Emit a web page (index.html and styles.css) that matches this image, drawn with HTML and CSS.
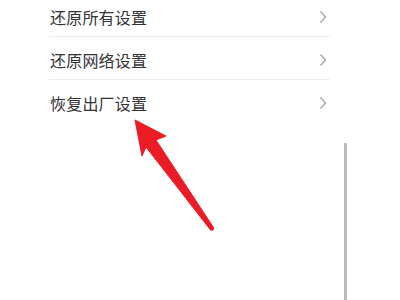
FILE: index.html
```html
<!DOCTYPE html>
<html lang="zh">
<head>
<meta charset="utf-8">
<link rel="stylesheet" href="styles.css">
</head>
<body>
<div class="page">
  <ul class="list">
    <li class="row"><span class="label">还原所有设置</span><svg class="chev" width="8" height="14" viewBox="0 0 8 14"><polyline points="1.5,1.5 6.5,7 1.5,12.5" fill="none" stroke="#a8a8a8" stroke-width="1.4"/></svg></li>
    <li class="row"><span class="label">还原网络设置</span><svg class="chev" width="8" height="14" viewBox="0 0 8 14"><polyline points="1.5,1.5 6.5,7 1.5,12.5" fill="none" stroke="#a8a8a8" stroke-width="1.4"/></svg></li>
    <li class="row last"><span class="label">恢复出厂设置</span><svg class="chev" width="8" height="14" viewBox="0 0 8 14"><polyline points="1.5,1.5 6.5,7 1.5,12.5" fill="none" stroke="#a8a8a8" stroke-width="1.4"/></svg></li>
  </ul>
  <div class="scrollbar"></div>
  <svg class="arrow" width="400" height="300" viewBox="0 0 400 300">
    <polygon points="135,120 166,136 156,140 213.5,227.5 210.5,230 146,147 142,156" fill="#ec1c26" stroke="#ec1c26" stroke-width="1" stroke-linejoin="round"/>
    <circle cx="212" cy="228.8" r="2" fill="#ec1c26"/>
  </svg>
</div>
</body>
</html>
```
FILE: styles.css
```css
html, body {
  margin: 0;
  padding: 0;
  background: #ffffff;
}
.page {
  position: relative;
  width: 400px;
  height: 300px;
  overflow: hidden;
  font-family: "Noto Sans CJK SC", "Noto Sans", sans-serif;
}
.list {
  list-style: none;
  margin: -6px 0 0 49px;
  padding: 0;
  width: 281px;
}
.row {
  display: flex;
  align-items: center;
  justify-content: space-between;
  box-sizing: border-box;
  height: 43px;
  padding: 3px 3px 0 1px;
  border-bottom: 1px solid #ededed;
}
.row.last {
  border-bottom: none;
}
.label {
  font-size: 16px;
  color: #333333;
  letter-spacing: 0.2px;
}
.chev {
  display: block;
}
.scrollbar {
  position: absolute;
  left: 344px;
  top: 143px;
  width: 3px;
  height: 157px;
  background: #bcbcbc;
}
.arrow {
  position: absolute;
  left: 0;
  top: 0;
}
```
